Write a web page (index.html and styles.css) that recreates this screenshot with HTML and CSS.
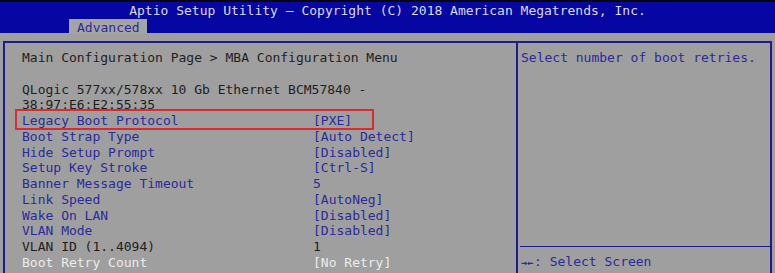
FILE: index.html
```html
<!DOCTYPE html>
<html>
<head>
<meta charset="utf-8">
<link rel="stylesheet" href="styles.css">
</head>
<body>
<div class="screen">
  <div class="topstrip"></div>
  <header class="header">
    <div class="title">Aptio Setup Utility – Copyright (C) 2018 American Megatrends, Inc.</div>
    <nav class="tabs"><span class="tab">Advanced</span></nav>
  </header>
  <div class="frame">
    <section class="left">
      <div class="line dark">Main Configuration Page &gt; MBA Configuration Menu</div>
      <div class="line blank"></div>
      <div class="line dark">QLogic 577xx/578xx 10 Gb Ethernet BCM57840 -</div>
      <div class="line dark">38:97:E6:E2:55:35</div>
      <div class="row boxed"><span class="label">Legacy Boot Protocol</span><span class="value">[PXE]</span></div>
      <div class="row"><span class="label">Boot Strap Type</span><span class="value">[Auto Detect]</span></div>
      <div class="row"><span class="label">Hide Setup Prompt</span><span class="value">[Disabled]</span></div>
      <div class="row"><span class="label">Setup Key Stroke</span><span class="value">[Ctrl-S]</span></div>
      <div class="row"><span class="label">Banner Message Timeout</span><span class="value">5</span></div>
      <div class="row"><span class="label">Link Speed</span><span class="value">[AutoNeg]</span></div>
      <div class="row"><span class="label">Wake On LAN</span><span class="value">[Disabled]</span></div>
      <div class="row"><span class="label">VLAN Mode</span><span class="value">[Disabled]</span></div>
      <div class="row dark"><span class="label">VLAN ID (1..4094)</span><span class="value">1</span></div>
      <div class="row selected"><span class="label">Boot Retry Count</span><span class="value">[No Retry]</span></div>
    </section>
    <aside class="right">
      <div class="help">Select number of boot retries.</div>
      <div class="keys">
        <div class="key"><span class="arrows">→←</span>: Select Screen</div>
      </div>
    </aside>
  </div>
</div>
</body>
</html>
```
FILE: styles.css
```css
html, body {
  margin: 0;
  padding: 0;
}
body {
  background: #9f9f9f;
  font-family: "DejaVu Sans Mono", "Liberation Mono", monospace;
  font-size: 13px;
  color: #2a2a9e;
}
.screen {
  width: 775px;
  height: 273px;
  overflow: hidden;
  background: #9f9f9f;
}
.topstrip {
  height: 2px;
  background: #050510;
}
.header {
  background: #0606a2;
  height: 31px;
  display: flex;
  flex-direction: column;
}
.title {
  color: #dcdce4;
  text-align: center;
  line-height: 16px;
  padding-top: 1px;
  height: 15px;
}
.tabs {
  display: flex;
  padding-left: 69px;
  margin-top: 1px;
}
.tab {
  background: #a4a4a4;
  color: #2a2aa0;
  height: 15px;
  line-height: 17px;
  padding: 0 8px;
  width: 62px;
}
.frame {
  margin: 8px 3px 0 3px;
  border: 2px solid #1c1c8e;
  border-bottom: none;
  display: grid;
  grid-template-columns: 511px 2px 1fr;
  height: 240px;
}
.left {
  padding: 7px 0 0 17px;
  grid-column: 1;
}
.right {
  grid-column: 3;
  display: flex;
  flex-direction: column;
}
.frame .left + .right {
  border-left: 2px solid #1c1c8e;
  margin-left: -2px;
}
.line, .row {
  line-height: 15.75px;
  height: 15.75px;
  white-space: pre;
}
.dark {
  color: #1e1e22;
}
.row {
  display: grid;
  grid-template-columns: 291px 1fr;
  position: relative;
}
.selected {
  color: #ececec;
}
.boxed::after {
  content: "";
  position: absolute;
  left: -7px;
  top: -4px;
  width: 355px;
  height: 17px;
  border: 2px solid #dc2a2e;
}
.help {
  padding: 7px 0 0 3px;
  line-height: 15.75px;
  height: 196px;
}
.keys {
  margin-left: 2px;
  border-top: 1px solid #1c1c8e;
  padding-top: 7px;
  padding-left: 1px;
}
.key {
  line-height: 15.75px;
}
.arrows {
  font-size: 10px;
  letter-spacing: 0;
  font-weight: bold;
  margin-right: 1px;
}
```
